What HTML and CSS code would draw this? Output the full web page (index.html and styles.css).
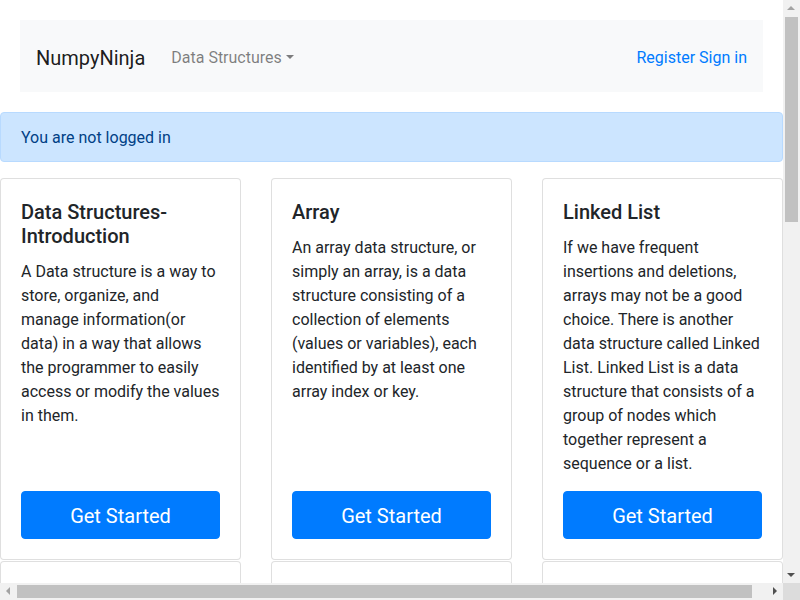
FILE: index.html
```html
<!DOCTYPE html>
<html lang="en">
<head>
<meta charset="utf-8">
<title>NumpyNinja</title>
<link rel="stylesheet" href="styles.css">
</head>
<body>
<div class="page">
  <nav class="navbar">
    <a class="brand" href="#">NumpyNinja</a>
    <a class="nav-link dropdown-toggle" href="#">Data Structures</a>
    <div class="nav-right">
      <a href="#">Register</a> <a href="#">Sign in</a>
    </div>
  </nav>
  <div class="alert">You are not logged in</div>
  <div class="cards">
    <div class="card">
      <h5 class="card-title">Data Structures-Introduction</h5>
      <p class="card-text">A Data structure is a way to store, organize, and manage information(or data) in a way that allows the programmer to easily access or modify the values in them.</p>
      <a class="btn" href="#">Get Started</a>
    </div>
    <div class="card">
      <h5 class="card-title">Array</h5>
      <p class="card-text">An array data structure, or simply an array, is a data structure consisting of a collection of elements (values or variables), each identified by at least one array index or key.</p>
      <a class="btn" href="#">Get Started</a>
    </div>
    <div class="card">
      <h5 class="card-title">Linked List</h5>
      <p class="card-text">If we have frequent insertions and deletions, arrays may not be a good choice. There is another data structure called Linked List. Linked List is a data structure that consists of a group of nodes which together represent a sequence or a list.</p>
      <a class="btn" href="#">Get Started</a>
    </div>
    <div class="card">
      <h5 class="card-title">Stack</h5>
      <p class="card-text">A stack is a linear data structure that follows the principle of Last In First Out (LIFO).</p>
      <a class="btn" href="#">Get Started</a>
    </div>
    <div class="card">
      <h5 class="card-title">Queue</h5>
      <p class="card-text">A queue is a linear data structure that follows the principle of First In First Out (FIFO).</p>
      <a class="btn" href="#">Get Started</a>
    </div>
    <div class="card">
      <h5 class="card-title">Tree</h5>
      <p class="card-text">A tree is a nonlinear hierarchical data structure that consists of nodes connected by edges.</p>
      <a class="btn" href="#">Get Started</a>
    </div>
  </div>
</div>

<div class="scrollbar-v" aria-hidden="true">
  <span class="arrow arrow-up"></span>
  <span class="thumb-v"></span>
  <span class="arrow arrow-down"></span>
</div>
<div class="scrollbar-h" aria-hidden="true">
  <span class="arrow arrow-left"></span>
  <span class="thumb-h"></span>
  <span class="arrow arrow-right"></span>
</div>
<div class="scroll-corner" aria-hidden="true"></div>
</body>
</html>
```

FILE: styles.css
```css
* { box-sizing: border-box; }
html, body { margin: 0; padding: 0; }
html { overflow: hidden; }
body {
  font-family: "Roboto", "Noto Sans", sans-serif;
  font-size: 16px;
  line-height: 1.5;
  color: #212529;
  background: #fff;
}
a { text-decoration: none; }
.page {
  width: 783px;
}
.navbar {
  margin: 20px 20px 0;
  height: 72px;
  padding: 4px 16px 0;
  background: #f8f9fa;
  display: flex;
  align-items: center;
}
.brand {
  font-size: 20px;
  color: rgba(0,0,0,.9);
  margin-right: 18px;
  line-height: 30px;
}
.nav-link {
  padding: 8px;
  color: rgba(0,0,0,.5);
}
.dropdown-toggle::after {
  content: "";
  display: inline-block;
  margin-left: .255em;
  vertical-align: .255em;
  border-top: .3em solid;
  border-right: .3em solid transparent;
  border-left: .3em solid transparent;
}
.nav-right { margin-left: auto; }
.nav-right a { color: #007bff; }
.alert {
  margin-top: 20px;
  padding: 13px 20px 11px;
  background: #cce5ff;
  border: 1px solid #b8daff;
  color: #004085;
  border-radius: 4px;
  height: 50px;
}
.cards {
  margin-top: 16px;
  display: grid;
  grid-template-columns: repeat(3, 241px);
  column-gap: 30px;
  row-gap: 1px;
}
.card {
  display: flex;
  flex-direction: column;
  border: 1px solid rgba(0,0,0,.125);
  border-radius: 4px;
  padding: 20px;
  background: #fff;
}
.card-title {
  margin: 0 0 12px;
  padding-top: 1px;
  font-size: 20px;
  font-weight: 500;
  line-height: 1.2;
}
.card-text {
  margin: 0 0 15px;
}
.btn {
  margin-top: auto;
  display: block;
  text-align: center;
  background: #007bff;
  border: 1px solid #007bff;
  color: #fff;
  border-radius: 4px;
  font-size: 20px;
  line-height: 30px;
  padding: 9px 16px 7px;
}

/* classic window scrollbars drawn over the page edge */
.scrollbar-v {
  position: fixed;
  top: 0;
  right: 0;
  width: 17px;
  height: 583px;
  background: #f1f1f1;
}
.scrollbar-h {
  position: fixed;
  left: 0;
  bottom: 0;
  width: 783px;
  height: 17px;
  background: #f1f1f1;
}
.scroll-corner {
  position: fixed;
  right: 0;
  bottom: 0;
  width: 17px;
  height: 17px;
  background: #dcdcdc;
}
.thumb-v {
  position: absolute;
  left: 2px;
  top: 17px;
  width: 13px;
  height: 205px;
  background: #c1c1c1;
}
.thumb-h {
  position: absolute;
  top: 2px;
  left: 17px;
  height: 13px;
  width: 735px;
  background: #c1c1c1;
}
.arrow {
  position: absolute;
  width: 0;
  height: 0;
}
.arrow-up {
  left: 4px;
  top: 6px;
  border-left: 4px solid transparent;
  border-right: 4px solid transparent;
  border-bottom: 4px solid #a3a3a3;
}
.arrow-down {
  left: 4px;
  bottom: 6px;
  border-left: 4px solid transparent;
  border-right: 4px solid transparent;
  border-top: 4px solid #505050;
}
.arrow-left {
  top: 4px;
  left: 6px;
  border-top: 4px solid transparent;
  border-bottom: 4px solid transparent;
  border-right: 4px solid #a3a3a3;
}
.arrow-right {
  top: 4px;
  right: 6px;
  border-top: 4px solid transparent;
  border-bottom: 4px solid transparent;
  border-left: 4px solid #505050;
}
```
